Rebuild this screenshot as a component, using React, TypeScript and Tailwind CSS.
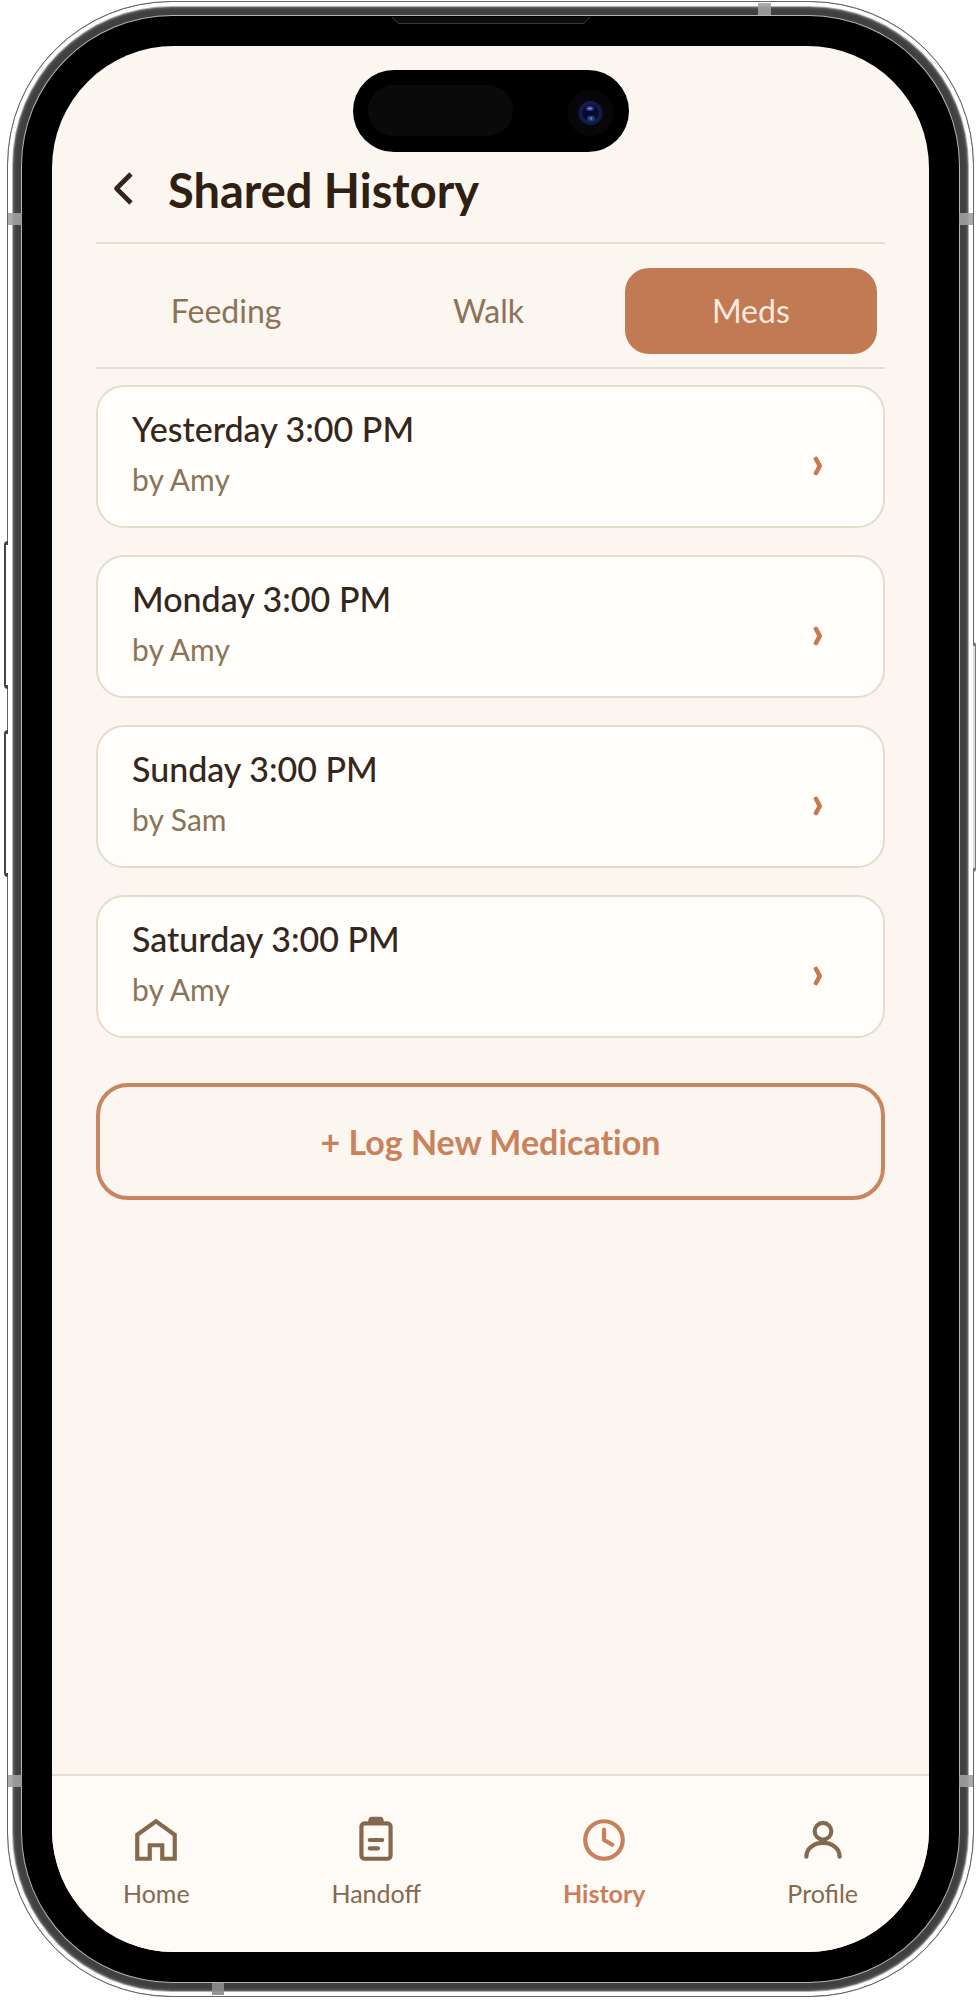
import React, { useState } from 'react';

type Tab = 'Feeding' | 'Walk' | 'Meds';

interface Entry {
  time: string;
  by: string;
}

const tabs: Tab[] = ['Feeding', 'Walk', 'Meds'];

const entries: Entry[] = [
  { time: 'Yesterday 3:00 PM', by: 'Amy' },
  { time: 'Monday 3:00 PM', by: 'Amy' },
  { time: 'Sunday 3:00 PM', by: 'Sam' },
  { time: 'Saturday 3:00 PM', by: 'Amy' },
];

const NavIcon: React.FC<{ children: React.ReactNode }> = ({ children }) => (
  <svg
    viewBox="0 0 24 24"
    className="size-[50px]"
    fill="none"
    stroke="currentColor"
    strokeWidth={2}
    aria-hidden="true"
  >
    {children}
  </svg>
);

const navItems = [
  {
    label: 'Home',
    icon: (
      <NavIcon>
        <path d="M3 9.5 12 3l9 6.5V21h-6v-6.5H9V21H3z" />
      </NavIcon>
    ),
  },
  {
    label: 'Handoff',
    icon: (
      <NavIcon>
        <rect x="5" y="4" width="14" height="17" rx="1.6" />
        <path d="M10 .8h4a1.6 1.6 0 0 1 1.6 1.6L16 4H8l.4-1.6A1.6 1.6 0 0 1 10 .8z" fill="currentColor" stroke="none" />
        <path d="M9 12h6M9 16h4" strokeLinecap="round" />
      </NavIcon>
    ),
  },
  {
    label: 'History',
    icon: (
      <NavIcon>
        <circle cx="12" cy="12" r="9" />
        <path d="M12 7v5l4 2.2" strokeLinecap="round" strokeLinejoin="round" />
      </NavIcon>
    ),
  },
  {
    label: 'Profile',
    icon: (
      <NavIcon>
        <circle cx="12" cy="7.8" r="4" />
        <path d="M4 20c0-3.8 3.4-6.6 8-6.6s8 2.8 8 6.6" strokeLinecap="round" />
      </NavIcon>
    ),
  },
];

const DynamicIsland = () => (
  <svg viewBox="0 0 276 82" className="mx-auto mt-6 block h-[82px] w-[276px] shrink-0" aria-hidden="true">
    <rect width="276" height="82" rx="41" fill="#000" />
    <rect x="15" y="15" width="145" height="51" rx="25.5" fill="#0a0a0a" />
    <circle cx="237.5" cy="43" r="23" fill="#08060a" />
    <circle cx="237.5" cy="43" r="12" fill="#141b49" />
    <circle cx="237.5" cy="43" r="8" fill="#070a2c" />
    <ellipse cx="237" cy="38.5" rx="4" ry="2.5" fill="#39398c" />
    <ellipse cx="237" cy="38.5" rx="2" ry="1" fill="#8a84d6" />
    <ellipse cx="238" cy="48.5" rx="4" ry="3" fill="#183f78" />
    <circle cx="238" cy="48.5" r="1.4" fill="#3f8a94" />
  </svg>
);

// Metal frame details: antenna bands, side buttons and the earpiece slit
const Hardware = () => (
  <div aria-hidden="true">
    <span className="absolute -left-1 top-[539px] h-[148px] w-1 rounded-l border-l-2 border-y-4 border-[#444] bg-white" />
    <span className="absolute -left-1 top-[728px] h-[147px] w-1 rounded-l border-l-2 border-y-4 border-[#444] bg-white" />
    <span className="absolute -right-[3px] top-[640px] h-[230px] w-[3px] rounded-r border-r border-y-4 border-[#777] bg-[#ddd]" />
    <span className="absolute left-0 top-[211px] h-3 w-[14px] bg-[#a0a0a0]/90" />
    <span className="absolute right-0 top-[211px] h-3 w-[14px] bg-[#a0a0a0]/90" />
    <span className="absolute bottom-[209px] left-0 h-3 w-[14px] bg-[#a0a0a0]/90" />
    <span className="absolute bottom-[209px] right-0 h-3 w-[14px] bg-[#a0a0a0]/90" />
    <span className="absolute right-[202px] top-px h-3 w-[13px] bg-[#a0a0a0]/90" />
    <span className="absolute bottom-px left-[204px] h-3 w-[12px] bg-[#8c8c8c]/90" />
    <svg viewBox="0 0 200 8" className="absolute left-1/2 top-[15px] h-2 w-[200px] -translate-x-1/2">
      <path d="M1 0 6 5.5Q7 6.5 9 6.5H191Q193 6.5 194 5.5L199 0" fill="#0c0c0c" stroke="#3c3c3c" />
    </svg>
  </div>
);

const App: React.FC = () => {
  const [tab, setTab] = useState<Tab>('Meds');
  const [page, setPage] = useState('History');

  return (
    <div className="flex min-h-screen bg-white pb-[3px] pl-[7px] pr-1 pt-px font-['Lato',sans-serif]">
      <div className="relative flex flex-1 rounded-[164px] border border-[#666] bg-[#404040] p-[14px] shadow-[inset_0_0_0_4px_#fff,inset_0_0_1px_5px_#bbb,inset_0_0_3px_6px_#666]">
        <Hardware />
        <div className="flex flex-1 rounded-[150px] bg-black p-[30px] shadow-[0_0_0_1px_#b4b4b4]">
          <div className="flex min-w-0 flex-1 flex-col overflow-hidden rounded-[122px] bg-[#fbf6f0]">
            <DynamicIsland />

            <main className="flex flex-1 flex-col px-11">
              <header className="flex items-center border-b-2 border-[#e8ddcf] pb-[22px] pt-2">
                <button aria-label="Back" className="ml-4 mr-8 text-[#33231a]">
                  <svg viewBox="0 0 24 36" className="h-9 w-6" fill="none" stroke="currentColor" strokeWidth="4.6" aria-hidden="true">
                    <path d="M19 2 4.5 16.5 19 31" strokeLinejoin="round" />
                  </svg>
                </button>
                <h1 className="text-[47px] font-bold leading-[60px] text-[#2f2012]">Shared History</h1>
              </header>

              <div role="tablist" className="flex gap-2.5 border-b-2 border-[#e8ddcf] pb-[13px] pl-1 pr-2 pt-6">
                {tabs.map((t) => (
                  <button
                    key={t}
                    role="tab"
                    aria-selected={tab === t}
                    onClick={() => setTab(t)}
                    className={`h-[86px] flex-1 rounded-3xl text-[32px] ${
                      tab === t ? 'bg-[#c27a54] text-[#faeade]' : 'text-[#8b7358]'
                    }`}
                  >
                    {t}
                  </button>
                ))}
              </div>

              <ul className="mt-4 flex flex-col gap-[27px]">
                {entries.map((entry) => (
                  <li key={entry.time}>
                    <button className="flex w-full items-center justify-between rounded-[28px] border-2 border-[#e6dccc] bg-[#fffefa] pb-[27px] pl-[34px] pr-[60px] pt-[18px] text-left">
                      <span className="flex flex-col gap-1.5">
                        <span className="text-[34px] font-medium leading-[48px] text-[#35271b]">{entry.time}</span>
                        <span className="text-[30px] leading-10 text-[#8b7358]">by {entry.by}</span>
                      </span>
                      <svg viewBox="0 0 10 20" className="mt-7 h-5 w-2.5 text-[#c9794f]" fill="none" stroke="currentColor" strokeWidth="4.6" aria-hidden="true">
                        <path d="M3 3 6.8 10 3 17" strokeLinecap="round" strokeLinejoin="round" />
                      </svg>
                    </button>
                  </li>
                ))}
              </ul>

              <button className="mt-[45px] h-[117px] rounded-[32px] border-4 border-[#c9855f] text-[34px] font-bold text-[#c9825c] [font-variant-ligatures:none]">
                + Log New Medication
              </button>
            </main>

            <nav className="flex justify-around border-t-2 border-[#e8ddcf] bg-[#fefaf5] pb-[43px] pt-[39px]">
              {navItems.map((item) => (
                <button
                  key={item.label}
                  onClick={() => setPage(item.label)}
                  className={`flex flex-col items-center gap-3 text-[25px] leading-8 ${
                    page === item.label ? 'font-bold text-[#c9805a]' : 'text-[#84694e]'
                  }`}
                >
                  {item.icon}
                  {item.label}
                </button>
              ))}
            </nav>
          </div>
        </div>
      </div>
    </div>
  );
};

export default App;
